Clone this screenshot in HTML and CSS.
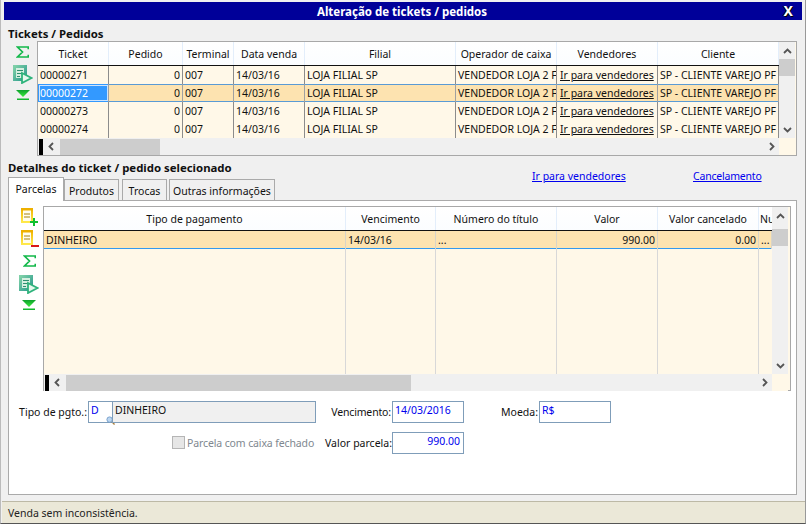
FILE: index.html
```html
<!DOCTYPE html>
<html lang="pt">
<head>
<meta charset="utf-8">
<title>Alteração de tickets / pedidos</title>
<link rel="stylesheet" href="styles.css">
</head>
<body>
<svg class="defs" width="0" height="0">
  <defs>
    <linearGradient id="tealg" x1="0" y1="0" x2="1" y2="1"><stop offset="0" stop-color="#7fd0a8"/><stop offset="1" stop-color="#2a9a8c"/></linearGradient>
    <linearGradient id="yelg" x1="0" y1="0" x2="0" y2="1"><stop offset="0" stop-color="#f0b400"/><stop offset="1" stop-color="#ffe94a"/></linearGradient>
    <linearGradient id="greeng" x1="0" y1="0" x2="0" y2="1"><stop offset="0" stop-color="#0fa02e"/><stop offset="1" stop-color="#38ee3a"/></linearGradient>
    <symbol id="sigma" viewBox="0 0 13 12"><path d="M12.300 3.200V1H1.500L6.500 6 1.500 11H12.300V8.800" fill="none" stroke="#12b84a" stroke-width="1.700"/></symbol>
    <symbol id="report" viewBox="0 0 20 19"><rect x="1.500" y="1.500" width="11" height="13" fill="#d6efe0" stroke="url(#tealg)" stroke-width="3"/><path d="M4 5.500h6M4 8.500h6M4 11.500h3" stroke="#2f8f70" stroke-width="1.200"/><path d="M9 8 18.500 13 9 18Z" fill="#e6f8ee" stroke="#2fb37c" stroke-width="1.800"/></symbol>
    <symbol id="down" viewBox="0 0 14 10"><path d="M0 0H14L7 7Z" fill="url(#greeng)"/><path d="M1 8.500H13V10H1Z" fill="#12b82e"/></symbol>
    <symbol id="docplus" viewBox="0 0 18 18"><rect x="1" y="1" width="10" height="13" fill="#fffdf0" stroke="url(#yelg)" stroke-width="2"/><path d="M0 0H12V2.500H0Z" fill="#eeb000"/><path d="M3 6h6M3 9h6" stroke="#a8840c"/><path d="M13 10v8M9 14h8" stroke="#10c030" stroke-width="2"/></symbol>
    <symbol id="docminus" viewBox="0 0 18 18"><rect x="1" y="1" width="10" height="13" fill="#fffdf0" stroke="url(#yelg)" stroke-width="2"/><path d="M0 0H12V2.500H0Z" fill="#eeb000"/><path d="M3 6h6M3 9h6" stroke="#a8840c"/><path d="M10 16h8" stroke="#d81818" stroke-width="2"/></symbol>
    <symbol id="up" viewBox="0 0 9 6"><path d="M1 5 4.500 1.500 8 5" fill="none" stroke="#555" stroke-width="1.800"/></symbol>
    <symbol id="dn" viewBox="0 0 9 6"><path d="M1 1 4.500 4.500 8 1" fill="none" stroke="#555" stroke-width="1.800"/></symbol>
    <symbol id="lf" viewBox="0 0 6 9"><path d="M5 1 1.500 4.500 5 8" fill="none" stroke="#555" stroke-width="1.800"/></symbol>
    <symbol id="rt" viewBox="0 0 6 9"><path d="M1 1 4.500 4.500 1 8" fill="none" stroke="#555" stroke-width="1.800"/></symbol>
  </defs>
</svg>
<div class="window">
  <header class="titlebar">
    <span class="title-text">Alteração de tickets / pedidos</span>
    <span class="close">X</span>
  </header>

  <main class="content">
    <h2 class="section-title">Tickets / Pedidos</h2>
    <div class="grid-row">
      <div class="toolbar toolbar-top">
        <svg class="ic-sigma"><use href="#sigma"/></svg>
        <svg class="ic-report"><use href="#report"/></svg>
        <svg class="ic-down"><use href="#down"/></svg>
      </div>
      <div class="datagrid tickets">
        <div class="grid-main">
          <div class="cols-t head">
            <span>Ticket</span><span>Pedido</span><span>Terminal</span><span>Data venda</span><span>Filial</span><span>Operador de caixa</span><span>Vendedores</span><span>Cliente</span>
          </div>
          <div class="cols-t row">
            <span>00000271</span><span class="num">0</span><span>007</span><span>14/03/16</span><span>LOJA FILIAL SP</span><span>VENDEDOR LOJA 2 F</span><span class="ulink">Ir para vendedores</span><span>SP - CLIENTE VAREJO PF</span>
          </div>
          <div class="cols-t row selected">
            <span class="current">00000272</span><span class="num">0</span><span>007</span><span>14/03/16</span><span>LOJA FILIAL SP</span><span>VENDEDOR LOJA 2 F</span><span class="ulink">Ir para vendedores</span><span>SP - CLIENTE VAREJO PF</span>
          </div>
          <div class="cols-t row">
            <span>00000273</span><span class="num">0</span><span>007</span><span>14/03/16</span><span>LOJA FILIAL SP</span><span>VENDEDOR LOJA 2 F</span><span class="ulink">Ir para vendedores</span><span>SP - CLIENTE VAREJO PF</span>
          </div>
          <div class="cols-t row">
            <span>00000274</span><span class="num">0</span><span>007</span><span>14/03/16</span><span>LOJA FILIAL SP</span><span>VENDEDOR LOJA 2 F</span><span class="ulink">Ir para vendedores</span><span>SP - CLIENTE VAREJO PF</span>
          </div>
        </div>
        <div class="vscroll">
          <svg class="arrow-v"><use href="#up"/></svg>
          <div class="vthumb"></div>
          <svg class="arrow-v arrow-end"><use href="#dn"/></svg>
        </div>
        <div class="hscroll">
          <i class="marker"></i>
          <svg class="arrow-h"><use href="#lf"/></svg>
          <div class="hthumb thumb-t"></div>
          <svg class="arrow-h arrow-end-h"><use href="#rt"/></svg>
        </div>
        <div class="corner"></div>
      </div>
    </div>

    <div class="details-head">
      <h2 class="section-title">Detalhes do ticket / pedido selecionado</h2>
      <a class="link link-a">Ir para vendedores</a>
      <a class="link link-b">Cancelamento</a>
    </div>

    <div class="tabs">
      <span class="tab active">Parcelas</span>
      <span class="tab t2">Produtos</span>
      <span class="tab t3">Trocas</span>
      <span class="tab t4">Outras informações</span>
    </div>

    <section class="panel">
      <div class="grid-row panel-grid">
        <div class="toolbar toolbar-panel">
          <svg class="ic-doc"><use href="#docplus"/></svg>
          <svg class="ic-doc"><use href="#docminus"/></svg>
          <svg class="ic-sigma"><use href="#sigma"/></svg>
          <svg class="ic-report"><use href="#report"/></svg>
          <svg class="ic-down"><use href="#down"/></svg>
        </div>
        <div class="datagrid parcelas">
          <div class="grid-main">
            <div class="cols-p head">
              <span>Tipo de pagamento</span><span>Vencimento</span><span>Número do título</span><span>Valor</span><span>Valor cancelado</span><span class="clip">Nu</span>
            </div>
            <div class="cols-p row selected line">
              <span>DINHEIRO</span><span>14/03/16</span><span>...</span><span class="num">990.00</span><span class="num">0.00</span><span>...</span>
            </div>
            <div class="cols-p row filler">
              <span></span><span></span><span></span><span></span><span></span><span></span>
            </div>
          </div>
          <div class="vscroll">
            <svg class="arrow-v"><use href="#up"/></svg>
            <div class="vthumb"></div>
            <svg class="arrow-v arrow-end"><use href="#dn"/></svg>
          </div>
          <div class="hscroll">
            <i class="marker"></i>
            <svg class="arrow-h"><use href="#lf"/></svg>
            <div class="hthumb thumb-p"></div>
            <svg class="arrow-h arrow-end-h"><use href="#rt"/></svg>
          </div>
          <div class="corner"></div>
        </div>
      </div>

      <div class="form-row first">
        <label class="lbl l-tipo">Tipo de pgto.:</label>
        <div class="lookup">
          <span class="field f-code">D<svg class="magnifier" viewBox="0 0 10 10"><circle cx="4" cy="4" r="3" fill="#bcd6f0" stroke="#6f9bc8"/><path d="M6.500 6.500 9.500 9.500" stroke="#a87f3c" stroke-width="1.500"/></svg></span>
          <span class="field f-desc">DINHEIRO</span>
        </div>
        <label class="lbl l-venc">Vencimento:</label>
        <span class="field f-date">14/03/2016</span>
        <label class="lbl l-moeda">Moeda:</label>
        <span class="field f-date">R$</span>
      </div>

      <div class="form-row second">
        <span class="checkbox"></span>
        <span class="check-label">Parcela com caixa fechado</span>
        <label class="lbl l-valor">Valor parcela:</label>
        <span class="field f-date right">990.00</span>
      </div>
    </section>
  </main>

  <footer class="statusbar">Venda sem inconsistência.</footer>
</div>
</body>
</html>
```

FILE: styles.css
```css
* { box-sizing: border-box; }
html, body { margin: 0; padding: 0; }
body { width: 806px; height: 524px; overflow: hidden; font: 10.500px "Noto Sans", "Liberation Sans", sans-serif; color: #111; background: #f0f0f0; }
.defs { position: absolute; }
.window { width: 806px; height: 524px; display: flex; flex-direction: column; background: #f0f0f0; padding: 2px 2px 0; border-right: 1px solid #999; border-left: 1px solid #bbb; border-bottom: 1px solid #555; }
.titlebar { margin: 0 1px; height: 18px; background: #000099; color: #fff; display: flex; align-items: center; justify-content: center; position: relative; font-weight: 700; font-size: 11.500px; flex: none; }
.title-text { margin-right: 2px; }
.close { position: absolute; right: 9px; top: 1px; font-weight: 700; font-size: 14px; line-height: 16px; color: #fff; text-shadow: 1px 1px #000, -1px 0 #000; }
.content { flex: 1; padding: 7px 6px 0 5px; min-height: 0; display: flex; flex-direction: column; }
.section-title { margin: 0; font-size: 11.400px; font-weight: 700; line-height: 14px; height: 14px; }
.grid-row { display: flex; }
.toolbar { width: 29px; flex: none; display: flex; flex-direction: column; align-items: center; }
.toolbar-top { padding-top: 5px; }
.ic-sigma { width: 13px; height: 12px; flex: none; }
.ic-report { width: 20px; height: 19px; flex: none; margin-top: 7px; }
.ic-down { width: 14px; height: 10px; flex: none; margin-top: 6px; }
.ic-doc { width: 18px; height: 18px; flex: none; margin-bottom: 4px; margin-left: 1px; }
.datagrid { display: grid; border: 1px solid #a8a8a8; background: #fff8e8; flex: none; }
.tickets { grid-template-columns: 741px 16px; grid-template-rows: 96px 17px; width: 760px; height: 115px; }
.parcelas { grid-template-columns: 728px 16px; grid-template-rows: 167px 17px; width: 748px; height: 185px; }
.grid-main { overflow: hidden; min-width: 0; }
.cols-t { display: grid; grid-template-columns: 71px 74px 51px 71px 151px 101px 101px 121px; }
.cols-p { display: grid; grid-template-columns: 302px 90px 121px 101px 101px 13px; }
.head { height: 24px; background: linear-gradient(#fff, #fbfdff); border-bottom: 1px solid #111; align-items: center; }
.head span { text-align: center; height: 23px; line-height: 24px; border-right: 1px solid #e3eefb; white-space: nowrap; overflow: hidden; }
.head .clip { text-align: left; padding-left: 1px; border-right: 0; }
.row { height: 18px; }
.row span { line-height: 19px; height: 18px; padding: 0 2px; white-space: nowrap; overflow: hidden; border-right: 1px solid #8c8c8c; }
.row .num { text-align: right; }
.row .ulink { text-decoration: underline; color: #111; padding-left: 3px; }
.selected { background: #fde3b0; box-shadow: inset 0 1px #5a9bd5, inset 0 -1px #5a9bd5; }
.selected span { border-right-color: #a0a0a0; }
.row .current { background: #3399ff; color: #fff; outline: 1px solid #cfe4fb; outline-offset: -2px; }
.line span { border-right-color: #d8d4c8; }
.parcelas .selected { box-shadow: inset 0 -1px #3399ee; }
.filler { height: 125px; }
.filler span { height: 125px; border-right-color: #d8d8d8; }
.filler span:last-child { border-right: 0; }
.vscroll { background: #f0f0f0; display: flex; flex-direction: column; align-items: center; }
.arrow-v { width: 9px; height: 6px; margin-top: 6px; flex: none; }
.vthumb { width: 16px; height: 17px; background: #cdcdcd; margin-top: 5px; flex: none; }
.parcelas .vthumb { margin-top: 10px; }
.arrow-end { margin-top: auto; margin-bottom: 5px; }
.hscroll { background: #f0f0f0; display: flex; align-items: center; }
.marker { width: 4px; height: 16px; background: #000; margin-left: 1px; flex: none; }
.arrow-h { width: 6px; height: 9px; margin-left: 5px; flex: none; }
.hthumb { height: 16px; background: #cdcdcd; margin-left: 6px; flex: none; }
.thumb-t { width: 100px; }
.thumb-p { width: 345px; }
.arrow-end-h { margin-left: auto; margin-right: 4px; }
.corner { background: #fff8e8; }
.details-head { display: flex; height: 18px; margin-top: 5px; }
.details-head .section-title { width: 524px; flex: none; }
.link { color: #0000ee; text-decoration: underline; margin-top: 8px; line-height: 14px; height: 14px; flex: none; }
.link-a { width: 161px; }
.link-b { letter-spacing: -0.2px; }
.tabs { display: flex; height: 22px; align-items: flex-end; margin-top: -1px; position: relative; z-index: 1; }
.tab { height: 21px; line-height: 23px; border: 1px solid #aaa; border-bottom: 0; background: #f0f0f0; text-align: center; flex: none; }
.tab.active { height: 24px; width: 56px; background: #fff; line-height: 22px; margin-bottom: -1px; }
.t2 { width: 55px; }
.t3 { width: 45px; margin-left: 3px; }
.t4 { width: 106px; margin-left: 2px; }
.panel { border: 1px solid #aaa; background: #fff; height: 295px; flex: none; }
.panel-grid { margin-top: 5px; }
.toolbar-panel { width: 34px; padding: 2px 0 0 6px; }
.toolbar-panel .ic-sigma { margin-top: 3px; }
.toolbar-panel .ic-report { margin-top: 8px; }
.form-row { display: flex; align-items: flex-start; }
.first { margin-top: 10px; height: 31px; }
.second { height: 22px; }
.lbl { white-space: nowrap; text-align: right; line-height: 22px; flex: none; padding-right: 1px; }
.lookup { display: flex; flex: none; }
.field { height: 22px; border: 1px solid #7f9db9; color: #0000ee; line-height: 17px; padding: 0 2px; background: #fff; flex: none; position: relative; display: block; white-space: nowrap; }
.l-tipo { width: 79px; }
.f-code { width: 25px; }
.f-desc { width: 204px; margin-left: -1px; background: #f0f0f0; color: #111; }
.magnifier { position: absolute; right: -3px; bottom: -3px; width: 9px; height: 9px; }
.l-venc { width: 76px; letter-spacing: -0.15px; }
.f-date { width: 72px; }
.l-moeda { width: 75px; }
.checkbox { width: 13px; height: 13px; border: 1px solid #b5b5b5; background: #e6e6e6; margin: 4px 0 0 163px; flex: none; }
.check-label { color: #808890; line-height: 22px; margin-left: 2px; width: 128px; flex: none; white-space: nowrap; letter-spacing: -0.12px; }
.l-valor { width: 77px; padding-right: 0; }
.right { text-align: right; padding-right: 3px; }
.statusbar { height: 22px; flex: none; margin: 6px -2px 0 -1px; padding-left: 6px; line-height: 22px; background: #ebe8d8; border-top: 1px solid #bdb9a6; color: #222; }
```
